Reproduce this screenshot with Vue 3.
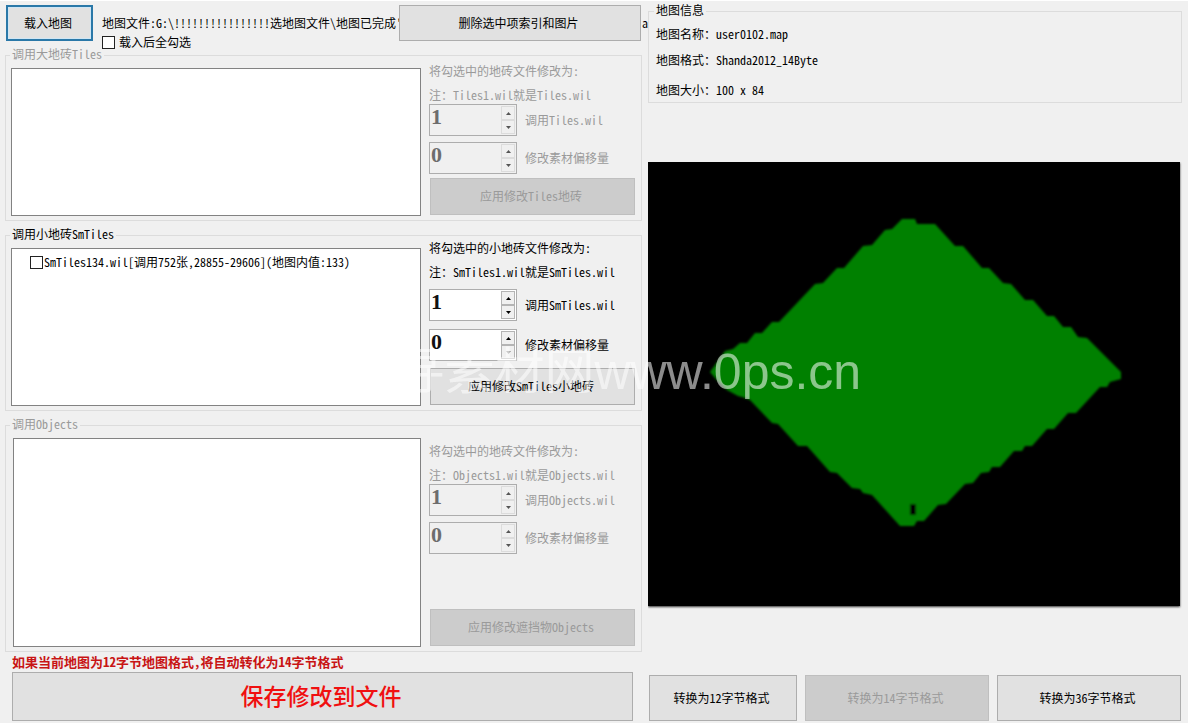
<script setup>
import { reactive, ref } from 'vue'

const selectAll = ref(false)

const groups = reactive([
  {
    id: 'tiles',
    title: '调用大地砖Tiles',
    disabled: true,
    heading: '将勾选中的地砖文件修改为:',
    note: '注：Tiles1.wil就是Tiles.wil',
    callLabel: '调用Tiles.wil',
    call: 1,
    offset: 0,
    apply: '应用修改Tiles地砖',
    items: [],
  },
  {
    id: 'smtiles',
    title: '调用小地砖SmTiles',
    disabled: false,
    heading: '将勾选中的小地砖文件修改为:',
    note: '注：SmTiles1.wil就是SmTiles.wil',
    callLabel: '调用SmTiles.wil',
    call: 1,
    offset: 0,
    apply: '应用修改SmTiles小地砖',
    items: [{ text: 'SmTiles134.wil[调用752张,28855-29606](地图内值:133)', checked: false }],
  },
  {
    id: 'objects',
    title: '调用Objects',
    disabled: true,
    heading: '将勾选中的地砖文件修改为:',
    note: '注：Objects1.wil就是Objects.wil',
    callLabel: '调用Objects.wil',
    call: 1,
    offset: 0,
    apply: '应用修改遮挡物Objects',
    items: [],
  },
])

const spinners = (g) => [
  { key: 'call', label: g.callLabel, downOff: false },
  { key: 'offset', label: '修改素材偏移量', downOff: !g.disabled && g.offset <= 0 },
]

const info = ['地图名称：user0102.map', '地图格式：Shanda2012_14Byte', '地图大小：100 x 84']

const outline =
  '62,210 77,189 85,187 92,181 99,181 107,171 114,171 124,160 131,160 167,122 175,121 189,106 196,106 215,84 224,83 237,68 244,67 254,57 267,57 269,62 287,62 307,84 315,84 334,106 341,106 355,121 363,122 377,138 385,138 399,154 406,154 415,165 423,165 430,175 439,176 473,210 473,217 462,220 459,225 452,225 428,251 420,251 406,267 399,267 384,284 377,284 374,289 366,289 352,305 344,305 341,310 333,311 325,321 317,322 298,342 290,343 276,359 269,359 266,364 252,364 224,333 215,331 212,327 204,326 189,311 182,310 159,284 150,284 130,262 124,261 102,238 94,235 90,234 79,228 67,216'
</script>

<template>
  <main class="window">
    <section class="left">
      <header class="top">
        <button class="btn load" type="button">载入地图</button>
        <div class="file">
          <span class="path">地图文件:G:\!!!!!!!!!!!!!!!!选地图文件\地图已完成'</span>
          <label class="tick"><input v-model="selectAll" type="checkbox" />载入后全勾选</label>
        </div>
        <button class="btn remove" type="button">删除选中项索引和图片</button>
        <span class="tail">a</span>
      </header>

      <fieldset v-for="g in groups" :key="g.id" class="group" :class="g.id" :disabled="g.disabled">
        <legend>{{ g.title }}</legend>
        <div class="body">
          <div class="list">
            <label v-for="item in g.items" :key="item.text" class="tick row">
              <input v-model="item.checked" type="checkbox" />{{ item.text }}
            </label>
          </div>
          <div class="panel">
            <p>{{ g.heading }}</p>
            <p>{{ g.note }}</p>
            <div class="spins">
              <div v-for="s in spinners(g)" :key="s.key" class="field">
                <div class="spin">
                  <input :id="g.id + s.key" v-model.number="g[s.key]" type="number" min="0" />
                  <div class="arrows">
                    <button type="button" aria-label="增加" @click="g[s.key]++">
                      <svg viewBox="0 0 5 3"><path d="M0 3L2.5 0L5 3Z" /></svg>
                    </button>
                    <button type="button" aria-label="减少" :class="{ off: s.downOff }" @click="g[s.key] > 0 && g[s.key]--">
                      <svg viewBox="0 0 5 3"><path d="M0 0L2.5 3L5 0Z" /></svg>
                    </button>
                  </div>
                </div>
                <label :for="g.id + s.key">{{ s.label }}</label>
              </div>
            </div>
            <button class="btn apply" type="button">{{ g.apply }}</button>
          </div>
        </div>
      </fieldset>

      <p class="warning">如果当前地图为12字节地图格式,将自动转化为14字节格式</p>
      <button class="btn save" type="button">保存修改到文件</button>
    </section>

    <section class="right">
      <fieldset class="group info">
        <legend>地图信息</legend>
        <p v-for="line in info" :key="line">{{ line }}</p>
      </fieldset>

      <svg class="map" viewBox="0 0 532 444" preserveAspectRatio="none">
        <defs>
          <filter id="soft"><feGaussianBlur stdDeviation="1" /></filter>
        </defs>
        <g filter="url(#soft)">
          <polygon :points="outline" fill="#008000" />
          <rect x="262" y="342" width="6" height="11" fill="#000" />
        </g>
      </svg>

      <div class="convert">
        <button class="btn" type="button">转换为12字节格式</button>
        <button class="btn" type="button" disabled>转换为14字节格式</button>
        <button class="btn" type="button">转换为36字节格式</button>
      </div>
    </section>

    <div class="watermark">寻素材网www.0ps.cn</div>
  </main>
</template>

<style>
body {
  background: #f0f0f0;
}
</style>

<style scoped>
.window,
.window button {
  font-family: "Noto Sans CJK SC", "Liberation Sans", sans-serif;
  font-size: 12px;
  font-feature-settings: "hwid";
  color: #000;
}
.window {
  position: relative;
  box-sizing: border-box;
  min-height: 100vh;
  display: grid;
  grid-template-columns: minmax(0, 648fr) minmax(0, 540fr);
  line-height: 14px;
  background: #f0f0f0;
  border-top: 1px solid #fff;
  overflow: hidden;
  white-space: nowrap;
}
p {
  margin: 0;
}
.left {
  display: flex;
  flex-direction: column;
  padding: 4px 6px 2px 5px;
}
.right {
  display: flex;
  flex-direction: column;
  padding: 4px 6px 2px 0;
}
.window .btn {
  box-sizing: border-box;
  padding: 0 3px 2px 0;
  border: 1px solid #adadad;
  border-radius: 0;
  background: #e1e1e1;
}
.window .btn:disabled {
  background: #ccc;
  border-color: #bfbfbf;
  color: #9a9a9a;
}
.top {
  display: flex;
  height: 44px;
  margin-right: -6px;
  padding-left: 1px;
}
.window .load {
  width: 87px;
  height: 36px;
  flex: none;
  border: 2px solid #2a78a8;
  box-shadow: inset 0 0 0 1px #cfe6f5;
}
.file {
  flex: 1;
  min-width: 0;
  margin-left: 9px;
  padding-top: 11px;
  overflow: hidden;
}
.path {
  display: block;
  overflow: hidden;
}
.remove {
  width: 242px;
  height: 36px;
  flex: none;
}
.tail {
  width: 7px;
  padding: 11px 0 0 1px;
  box-sizing: border-box;
}
.tick {
  display: flex;
  align-items: center;
  gap: 4px;
}
.file .tick {
  margin-top: 5px;
}
.tick input {
  appearance: none;
  box-sizing: border-box;
  width: 13px;
  height: 13px;
  flex: none;
  margin: 0;
  border: 1px solid #222;
  background: #fff;
}
.tick input:checked {
  box-shadow: inset 0 0 0 2px #fff;
  background: #222;
}
.group {
  min-width: 0;
  margin: 0 0 8px;
  padding: 0;
  border: 1px solid #dcdcdc;
}
.group legend {
  height: 12px;
  line-height: 10px;
  margin-left: 4px;
  padding: 0 2px;
}
.group:disabled {
  color: #9a9a9a;
}
.body {
  display: flex;
  gap: 8px;
  padding: 0 6px 4px 5px;
}
.list {
  flex: 1;
  min-width: 0;
  box-sizing: border-box;
  margin-top: 7px;
  padding: 6px 18px;
  border: 1px solid #828282;
  background: #fff;
}
.row {
  gap: 1px;
}
.panel {
  width: 206px;
  display: flex;
  flex-direction: column;
}
.panel p + p {
  margin-top: 10px;
}
.spins {
  display: flex;
  flex-direction: column;
  gap: 6px;
  margin: 2px 0 4px;
}
.field {
  display: flex;
  align-items: center;
  gap: 8px;
}
.spin {
  box-sizing: border-box;
  width: 88px;
  height: 32px;
  display: flex;
  border: 1px solid #adadad;
  background: #fff;
  padding: 1px;
}
.spin input {
  appearance: textfield;
  flex: 1;
  min-width: 0;
  box-sizing: border-box;
  border: 0;
  padding: 0 0 6px;
  background: none;
  color: #111;
  font: bold 22px "Liberation Serif", serif;
}
.spin input::-webkit-inner-spin-button {
  display: none;
}
.arrows {
  width: 14px;
  display: flex;
  flex-direction: column;
}
.arrows button {
  flex: 1;
  min-height: 0;
  box-sizing: border-box;
  display: flex;
  align-items: center;
  justify-content: center;
  padding: 0;
  border: 1px solid #b4b4b4;
  background: #f0f0f0;
}
.arrows svg {
  width: 5px;
  height: 3px;
  fill: #000;
}
.arrows .off svg {
  fill: #888;
}
.group:disabled .spin {
  background: #f0f0f0;
}
.group:disabled .spin input {
  color: #6d6d6d;
}
.group:disabled .arrows button {
  border-color: #dcdcdc;
}
.group:disabled .arrows svg {
  fill: #555;
}
.apply {
  height: 37px;
  margin: auto 0 1px 1px;
}
.tiles .panel {
  padding-top: 3px;
}
.smtiles .spins {
  gap: 8px;
  margin: 10px 0 7px;
}
.objects {
  margin-bottom: 3px;
}
.objects .body {
  min-height: 216px;
  padding-left: 7px;
}
.objects .panel {
  padding-top: 13px;
}
.warning {
  margin-left: 7px;
  font-size: 13px;
  font-weight: bold;
  color: #c81414;
}
.window .save {
  flex: 1;
  min-height: 49px;
  margin: 3px 9px 0 7px;
  padding-bottom: 4px;
  font-size: 23px;
  font-weight: 500;
  color: #f01010;
}
.info {
  margin: 0;
  padding: 0 7px 5px;
}
.info legend {
  margin-left: -2px;
}
.info p {
  margin-top: 12px;
}
.info p:first-of-type {
  margin-top: 10px;
}
.info p:last-of-type {
  margin-top: 16px;
}
.map {
  display: block;
  aspect-ratio: 532 / 444;
  margin: 59px 2px 0 0;
  background: #000;
  box-shadow: 0 1px 2px #333;
  clip-path: inset(0 -3px -4px 0);
}
.convert {
  display: grid;
  grid-template-columns: 148fr 184fr 184fr;
  gap: 8px;
  height: 46px;
  margin: auto 1px 0;
}
.watermark {
  position: absolute;
  left: 33.2%;
  top: 335px;
  font-family: "Liberation Sans", "Noto Sans CJK SC", sans-serif;
  font-size: 50px;
  line-height: 72px;
  font-feature-settings: normal;
  color: rgba(255, 255, 255, 0.55);
  pointer-events: none;
}
</style>
